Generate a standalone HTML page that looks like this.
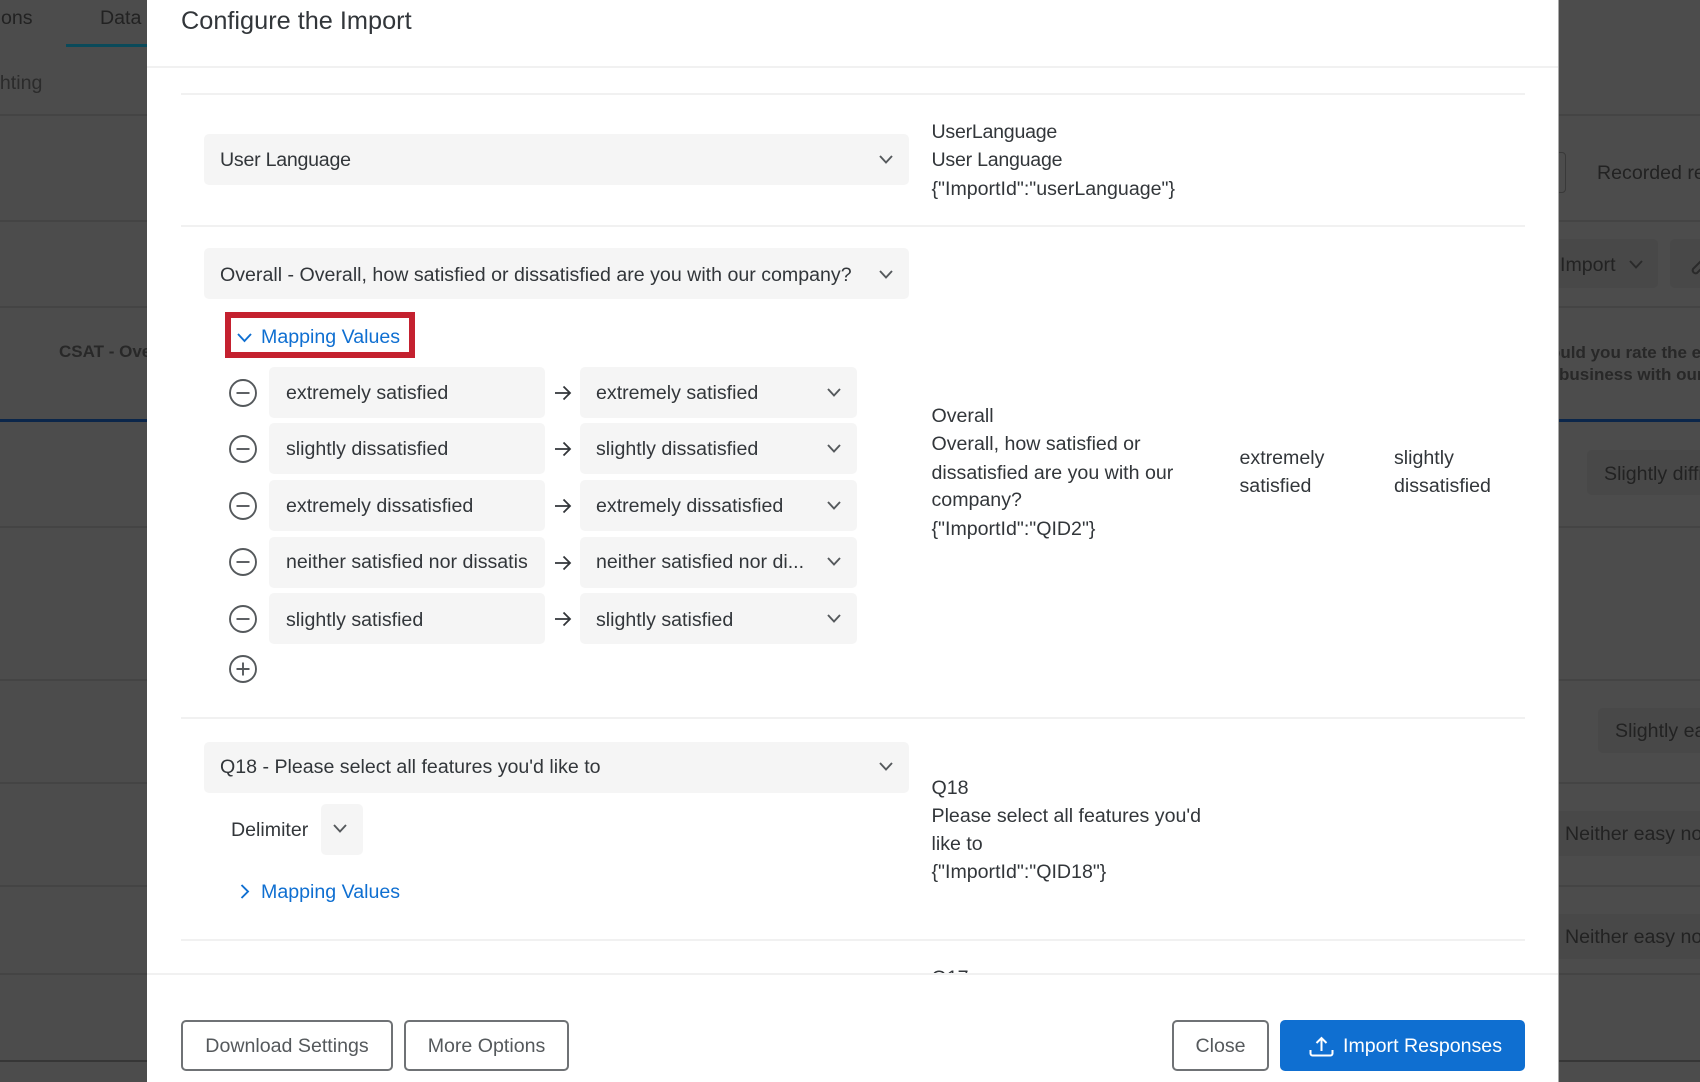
<!DOCTYPE html>
<html lang="en">
<head>
<meta charset="utf-8">
<title>Configure the Import</title>
<style>
html,body{margin:0;padding:0;width:1700px;height:1082px;overflow:hidden;background:#4c4c4c}
body{position:relative;font-family:"Liberation Sans",sans-serif;font-size:19.6px;color:#32363a;filter:blur(.3px)}
.t{position:absolute;white-space:nowrap;line-height:28px;height:28px}
.b{position:absolute;background:#f5f5f5;border-radius:5px}
.d{position:absolute;background:#484848;border-radius:5px}
.k{color:#222}
.h{position:absolute;height:2px;background:#444}
.r{position:absolute;height:2px;background:#f1f1f1}
svg{position:absolute;overflow:visible;fill:none}
.c path{stroke:#55595c;stroke-width:1.9}
.o circle,.o path{stroke:#55595c;stroke-width:1.9}
.a path{stroke:#32363a;stroke-width:1.8}
.btn{position:absolute;top:1020px;height:51px;box-sizing:border-box;border:2px solid #6f7275;border-radius:5px;background:#fff;color:#55595c;line-height:49px;text-align:center;white-space:nowrap}
.blue{color:#0f6fd1}
</style>
</head>
<body>
<!-- dimmed page behind -->
<div class="h" style="left:0;top:114px;width:1700px"></div>
<div class="h" style="left:0;top:220px;width:1700px"></div>
<div class="h" style="left:0;top:306px;width:1700px"></div>
<div class="h" style="left:0;top:526px;width:1700px"></div>
<div class="h" style="left:0;top:679px;width:1700px"></div>
<div class="h" style="left:0;top:782px;width:1700px"></div>
<div class="h" style="left:0;top:885px;width:1700px"></div>
<div class="h" style="left:0;top:973px;width:1700px"></div>
<div class="h" style="left:0;top:1060px;width:1700px;background:#363636"></div>
<div class="h" style="left:0;top:419px;width:1700px;height:3px;background:#0b264a"></div>
<div class="h" style="left:66px;top:44px;width:81px;height:3px;background:#0a4a5a"></div>
<div class="t k" style="left:1px;top:4px">ons</div>
<div class="t k" style="left:100px;top:4px">Data</div>
<div class="t" style="left:-11px;top:69px;color:#2b2b2b">ghting</div>
<div class="t" style="left:59px;top:338px;font-weight:bold;font-size:17px;color:#282828">CSAT - Overall</div>
<div style="position:absolute;left:1530px;top:152px;width:36px;height:41px;box-sizing:border-box;border:1px solid #393939;border-radius:4px"></div>
<div class="t k" style="left:1597px;top:159px">Recorded response</div>
<div class="d" style="left:1540px;top:239px;width:118px;height:49px"></div>
<div class="d" style="left:1670px;top:239px;width:60px;height:49px"></div>
<div class="t k" style="left:1560px;top:251px">Import</div>
<svg class="c" style="left:1629px;top:260px" width="14" height="9"><path d="M1 1l6 6.500L13 1" style="stroke:#2a2a2a"/></svg>
<svg style="left:1690px;top:250px" width="14" height="28"><path d="M12 10L3 19a3 3 0 0 0 4 4L14 16" stroke="#2a2a2a" stroke-width="2"/></svg>
<div class="t" style="left:1550px;top:339px;font-weight:bold;font-size:17px;color:#282828">ould you rate the ease</div>
<div class="t" style="left:1559px;top:361px;font-weight:bold;font-size:17px;color:#282828">business with our</div>
<div class="d" style="left:1587px;top:450px;width:140px;height:45px"></div>
<div class="t k" style="left:1604px;top:460px">Slightly difficult</div>
<div class="d" style="left:1598px;top:708px;width:130px;height:45px"></div>
<div class="t k" style="left:1615px;top:717px">Slightly easy</div>
<div class="d" style="left:1540px;top:811px;width:200px;height:45px"></div>
<div class="t k" style="left:1565px;top:820px">Neither easy nor</div>
<div class="d" style="left:1540px;top:914px;width:200px;height:45px"></div>
<div class="t k" style="left:1565px;top:923px">Neither easy nor</div>

<!-- modal -->
<div style="position:absolute;left:147px;top:0;width:1411px;height:1082px;background:#fff;border-right:1px solid #a9a9a9"></div>
<div class="t" style="left:181px;top:7px;font-size:25.3px">Configure the Import</div>
<div class="r" style="left:147px;top:66px;width:1411px"></div>
<div class="r" style="left:181px;top:93px;width:1344px"></div>

<div class="b" style="left:204px;top:134px;width:705px;height:51px"></div>
<div class="t" style="left:220px;top:146px;letter-spacing:-.25px">User Language</div>
<svg class="c" style="left:879px;top:155px" width="14" height="9"><path d="M1 1l6 6.500L13 1"/></svg>
<div class="t" style="left:931.500px;top:118px;letter-spacing:-.25px">UserLanguage</div>
<div class="t" style="left:931.500px;top:146px;letter-spacing:-.25px">User Language</div>
<div class="t" style="left:931.500px;top:175px">{"ImportId":"userLanguage"}</div>
<div class="r" style="left:181px;top:225px;width:1344px"></div>

<div class="b" style="left:204px;top:248px;width:705px;height:51px"></div>
<div class="t" style="left:220px;top:261px">Overall - Overall, how satisfied or dissatisfied are you with our company?</div>
<svg class="c" style="left:879px;top:270px" width="14" height="9"><path d="M1 1l6 6.500L13 1"/></svg>

<div style="position:absolute;left:225px;top:312px;width:190px;height:46px;box-sizing:border-box;border:6px solid #c4212f"></div>
<svg style="left:237px;top:333px" width="15" height="10"><path d="M1 1l6.500 7L14 1" stroke="#0f6fd1" stroke-width="1.9"/></svg>
<div class="t blue" style="left:261px;top:323px">Mapping Values</div>

<!-- mapping rows -->
<svg class="o" style="left:229px;top:379px" width="28" height="28"><circle cx="14" cy="14" r="13"/><path d="M7.500 14h13"/></svg>
<div class="b" style="left:269px;top:367px;width:276px;height:51px"></div>
<div class="t" style="left:286px;top:379px">extremely satisfied</div>
<svg class="a" style="left:555px;top:385px" width="16" height="16"><path d="M0 8h15M8.500 1.500L15 8l-6.500 6.500"/></svg>
<div class="b" style="left:580px;top:367px;width:277px;height:51px"></div>
<div class="t" style="left:596px;top:379px">extremely satisfied</div>
<svg class="c" style="left:827px;top:388px" width="14" height="9"><path d="M1 1l6 6.500L13 1"/></svg>

<svg class="o" style="left:229px;top:435px" width="28" height="28"><circle cx="14" cy="14" r="13"/><path d="M7.500 14h13"/></svg>
<div class="b" style="left:269px;top:423px;width:276px;height:51px"></div>
<div class="t" style="left:286px;top:435px">slightly dissatisfied</div>
<svg class="a" style="left:555px;top:441px" width="16" height="16"><path d="M0 8h15M8.500 1.500L15 8l-6.500 6.500"/></svg>
<div class="b" style="left:580px;top:423px;width:277px;height:51px"></div>
<div class="t" style="left:596px;top:435px">slightly dissatisfied</div>
<svg class="c" style="left:827px;top:444px" width="14" height="9"><path d="M1 1l6 6.500L13 1"/></svg>

<svg class="o" style="left:229px;top:492px" width="28" height="28"><circle cx="14" cy="14" r="13"/><path d="M7.500 14h13"/></svg>
<div class="b" style="left:269px;top:480px;width:276px;height:51px"></div>
<div class="t" style="left:286px;top:492px">extremely dissatisfied</div>
<svg class="a" style="left:555px;top:498px" width="16" height="16"><path d="M0 8h15M8.500 1.500L15 8l-6.500 6.500"/></svg>
<div class="b" style="left:580px;top:480px;width:277px;height:51px"></div>
<div class="t" style="left:596px;top:492px">extremely dissatisfied</div>
<svg class="c" style="left:827px;top:501px" width="14" height="9"><path d="M1 1l6 6.500L13 1"/></svg>

<svg class="o" style="left:229px;top:548px" width="28" height="28"><circle cx="14" cy="14" r="13"/><path d="M7.500 14h13"/></svg>
<div class="b" style="left:269px;top:537px;width:276px;height:51px"></div>
<div class="t" style="left:286px;top:548px">neither satisfied nor dissatis</div>
<svg class="a" style="left:555px;top:555px" width="16" height="16"><path d="M0 8h15M8.500 1.500L15 8l-6.500 6.500"/></svg>
<div class="b" style="left:580px;top:537px;width:277px;height:51px"></div>
<div class="t" style="left:596px;top:548px">neither satisfied nor di...</div>
<svg class="c" style="left:827px;top:557px" width="14" height="9"><path d="M1 1l6 6.500L13 1"/></svg>

<svg class="o" style="left:229px;top:605px" width="28" height="28"><circle cx="14" cy="14" r="13"/><path d="M7.500 14h13"/></svg>
<div class="b" style="left:269px;top:593px;width:276px;height:51px"></div>
<div class="t" style="left:286px;top:606px">slightly satisfied</div>
<svg class="a" style="left:555px;top:611px" width="16" height="16"><path d="M0 8h15M8.500 1.500L15 8l-6.500 6.500"/></svg>
<div class="b" style="left:580px;top:593px;width:277px;height:51px"></div>
<div class="t" style="left:596px;top:606px">slightly satisfied</div>
<svg class="c" style="left:827px;top:614px" width="14" height="9"><path d="M1 1l6 6.500L13 1"/></svg>

<svg class="o" style="left:229px;top:655px" width="28" height="28"><circle cx="14" cy="14" r="13"/><path d="M7.500 14h13M14 7.500v13"/></svg>

<div class="t" style="left:931.500px;top:402px">Overall</div>
<div class="t" style="left:931.500px;top:430px">Overall, how satisfied or</div>
<div class="t" style="left:931.500px;top:459px">dissatisfied are you with our</div>
<div class="t" style="left:931.500px;top:486px">company?</div>
<div class="t" style="left:931.500px;top:515px">{"ImportId":"QID2"}</div>
<div class="t" style="left:1239.500px;top:444px">extremely</div>
<div class="t" style="left:1239.500px;top:472px">satisfied</div>
<div class="t" style="left:1394px;top:444px">slightly</div>
<div class="t" style="left:1394px;top:472px">dissatisfied</div>

<div class="r" style="left:181px;top:717px;width:1344px"></div>

<div class="b" style="left:204px;top:742px;width:705px;height:51px"></div>
<div class="t" style="left:220px;top:753px">Q18 - Please select all features you'd like to</div>
<svg class="c" style="left:879px;top:762px" width="14" height="9"><path d="M1 1l6 6.500L13 1"/></svg>
<div class="t" style="left:231px;top:816px">Delimiter</div>
<div class="b" style="left:321px;top:804px;width:42px;height:51px"></div>
<svg class="c" style="left:333px;top:824px" width="14" height="9"><path d="M1 1l6 6.500L13 1"/></svg>
<svg style="left:240px;top:884px" width="10" height="15"><path d="M1.500 1L8 7.500 1.500 14" stroke="#0f6fd1" stroke-width="1.9"/></svg>
<div class="t blue" style="left:261px;top:878px">Mapping Values</div>

<div class="t" style="left:931.500px;top:774px">Q18</div>
<div class="t" style="left:931.500px;top:802px">Please select all features you'd</div>
<div class="t" style="left:931.500px;top:830px">like to</div>
<div class="t" style="left:931.500px;top:858px">{"ImportId":"QID18"}</div>

<div class="r" style="left:181px;top:939px;width:1344px"></div>
<div class="t" style="left:931.500px;top:964px">Q17</div>

<!-- footer -->
<div style="position:absolute;left:147px;top:973px;width:1411px;height:109px;background:#fff;border-top:2px solid #f1f1f1;box-sizing:border-box"></div>
<div class="btn" style="left:181px;width:212px">Download Settings</div>
<div class="btn" style="left:404px;width:165px">More Options</div>
<div class="btn" style="left:1172px;width:97px">Close</div>
<div class="btn" style="left:1280px;width:245px;background:#0f6fd1;border-color:#0f6fd1;color:#fff;text-align:left;padding-left:61px">Import Responses</div>
<svg style="left:1309px;top:1036px" width="26" height="22"><path d="M12.500 15V2M7.500 7l5-5 5 5M1.500 14v3.500a2 2 0 0 0 2 2h18a2 2 0 0 0 2-2V14" stroke="#fff" stroke-width="2"/></svg>
</body>
</html>
